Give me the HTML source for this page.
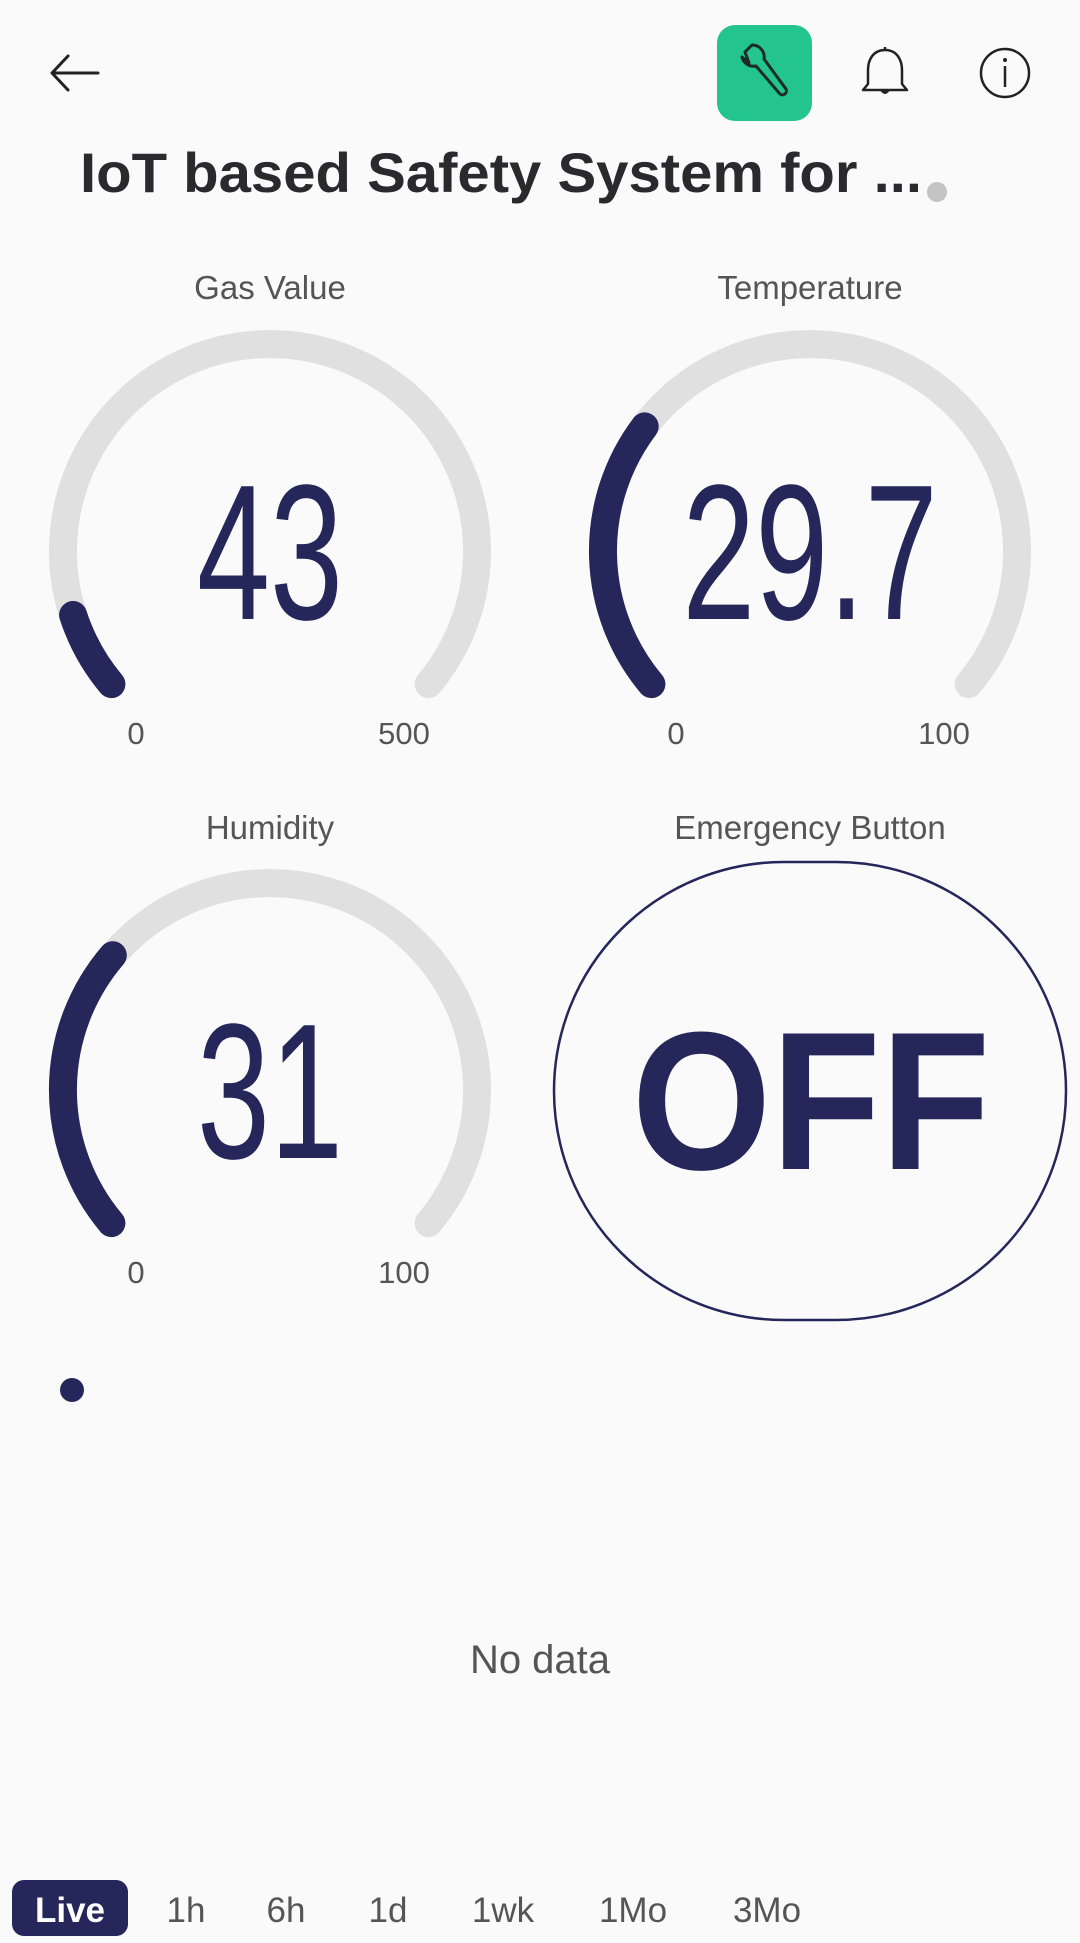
<!DOCTYPE html>
<html><head><meta charset="utf-8"><style>
html,body{margin:0;padding:0;background:#fafafa;}
body{width:1080px;height:1943px;position:relative;overflow:hidden;font-family:"Liberation Sans",sans-serif;}
svg{position:absolute;left:0;top:0;}
</style></head><body>
<svg width="1080" height="1943" viewBox="0 0 1080 1943" xmlns="http://www.w3.org/2000/svg" font-family="Liberation Sans, sans-serif">
<path d="M52 73 H98 M52 73 L68 56 M52 73 L68 90" stroke="#222" stroke-width="3" fill="none" stroke-linecap="round"/>
<rect x="717" y="25" width="95" height="96" rx="18" fill="#23c48e"/>
<path d="M745 52 l7 -7 a12 12 0 0 1 12 14 l22 30 a4 4 0 0 1 -6 5 l-24 -28 a12 12 0 0 1 -14 -9 l7 6 z" fill="none" stroke="#1d2b27" stroke-width="3" stroke-linejoin="round"/>
<path d="M885 50 c-12 0 -17 10 -17 20 v14 l-5 6 h44 l-5 -6 v-14 c0 -10 -5 -20 -17 -20 z M885 50 v-3" fill="none" stroke="#222" stroke-width="2.5" stroke-linejoin="round"/>
<path d="M880 90 q5 8 10 0 z" fill="#222"/>
<circle cx="1005" cy="73" r="24" fill="none" stroke="#222" stroke-width="2.5"/>
<line x1="1005" y1="66" x2="1005" y2="87" stroke="#222" stroke-width="2.5"/>
<circle cx="1005" cy="60" r="2" fill="#222"/>
<text x="80" y="192" font-size="56" font-weight="bold" fill="#2a2a2e" textLength="842" lengthAdjust="spacingAndGlyphs">IoT based Safety System for ...</text>
<circle cx="937" cy="192" r="10" fill="#c4c4c4"/>
<g font-size="33" fill="#555" text-anchor="middle">
<text x="270" y="299">Gas Value</text>
<text x="810" y="299">Temperature</text>
<text x="270" y="839">Humidity</text>
<text x="810" y="839">Emergency Button</text>
</g>
<g fill="none" stroke-width="28" stroke-linecap="round">
<path d="M111.4 684.1 A207 207 0 1 1 428.6 684.1" stroke="#e0e0e0"/>
<path d="M111.4 684.1 A207 207 0 0 1 73.1 615" stroke="#25265a"/>
<path d="M651.4 684.1 A207 207 0 1 1 968.6 684.1" stroke="#e0e0e0"/>
<path d="M651.4 684.1 A207 207 0 0 1 644.7 426.4" stroke="#25265a"/>
<path d="M111.4 1223.1 A207 207 0 1 1 428.6 1223.1" stroke="#e0e0e0"/>
<path d="M111.4 1223.1 A207 207 0 0 1 112.8 955.2" stroke="#25265a"/>
</g>
<g font-size="193" fill="#25265a" text-anchor="middle">
<text x="270" y="619" transform="translate(270 0) scale(0.68 1) translate(-270 0)">43</text>
<text x="810" y="619" transform="translate(810 0) scale(0.68 1) translate(-810 0)">29.7</text>
<text x="270" y="1158" transform="translate(270 0) scale(0.68 1) translate(-270 0)">31</text>
</g>
<g font-size="31" fill="#555" text-anchor="middle">
<text x="136" y="744">0</text><text x="404" y="744">500</text>
<text x="676" y="744">0</text><text x="944" y="744">100</text>
<text x="136" y="1283">0</text><text x="404" y="1283">100</text>
</g>
<rect x="554" y="862" width="512" height="458" rx="230" ry="229" fill="none" stroke="#25265a" stroke-width="2.5"/>
<text x="811" y="1169" font-size="197" font-weight="bold" fill="#25265a" text-anchor="middle" transform="translate(811 0) scale(0.91 1) translate(-811 0)">OFF</text>
<circle cx="72" cy="1390" r="12" fill="#25265a"/>
<text x="540" y="1673" font-size="40" fill="#555" text-anchor="middle">No data</text>
<rect x="12" y="1880" width="116" height="56" rx="12" fill="#25265a"/>
<g font-size="35" text-anchor="middle" fill="#555">
<text x="70" y="1922" fill="#fff" font-weight="bold">Live</text>
<text x="186" y="1922">1h</text>
<text x="286" y="1922">6h</text>
<text x="388" y="1922">1d</text>
<text x="503" y="1922">1wk</text>
<text x="633" y="1922">1Mo</text>
<text x="767" y="1922">3Mo</text>
</g>
</svg>
</body></html>
